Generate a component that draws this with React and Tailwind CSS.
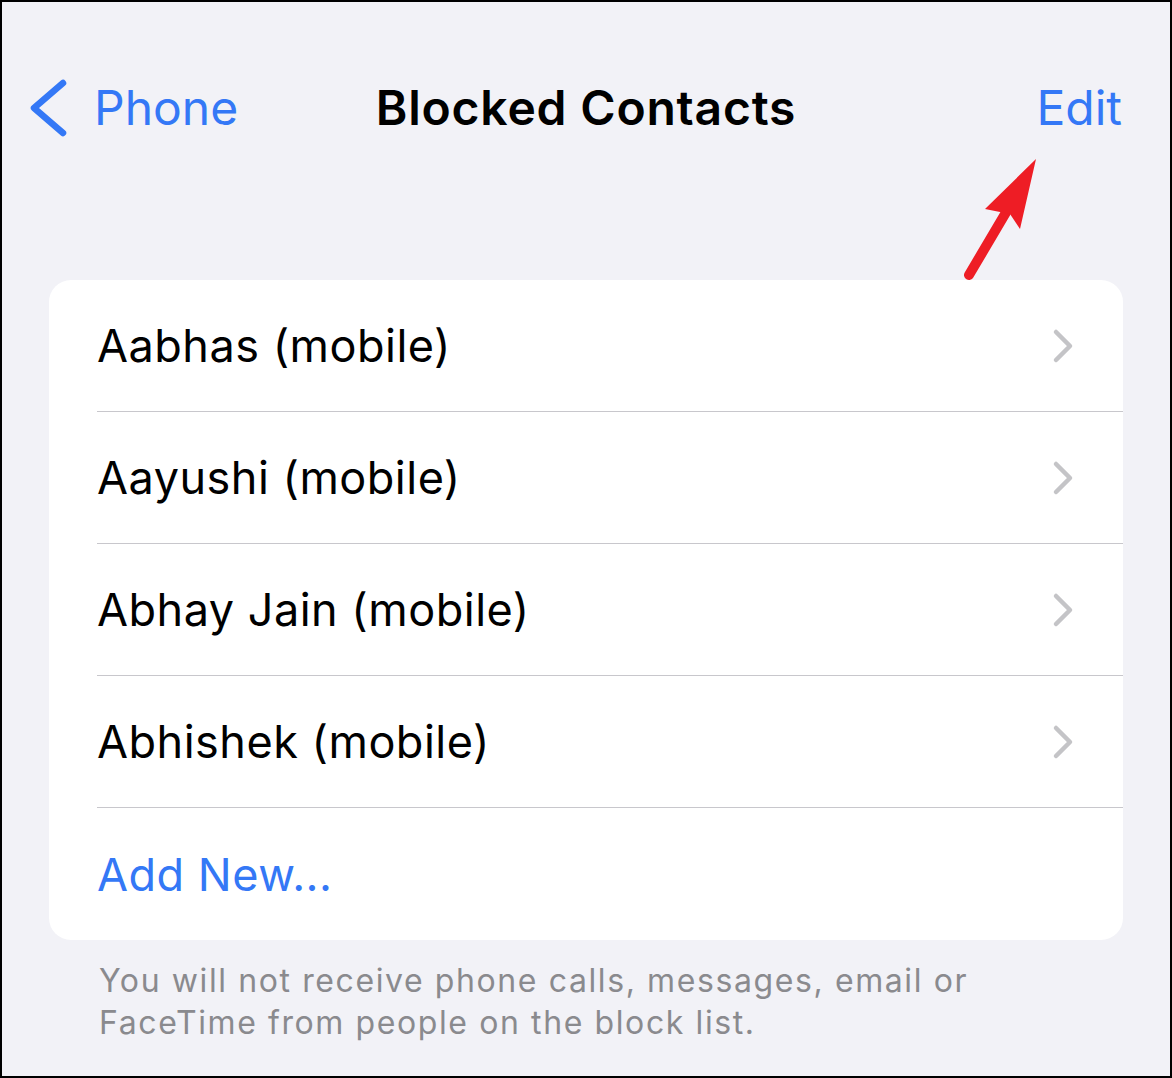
import React from 'react';

const contacts = [
  'Aabhas (mobile)',
  'Aayushi (mobile)',
  'Abhay Jain (mobile)',
  'Abhishek (mobile)',
];

const Chevron = () => (
  <svg width="24" height="36" viewBox="0 0 24 36" fill="none">
    <polyline points="5,4 19,18 5,32" stroke="#c4c4c7" strokeWidth="4.5" strokeLinecap="round" strokeLinejoin="round" />
  </svg>
);

export default function App() {
  return (
    <div
      className="relative w-[1172px] h-[1078px] box-border border-2 border-black bg-[#f2f2f7] overflow-hidden"
      style={{ fontFamily: 'Inter, "Noto Sans", sans-serif' }}
    >
      {/* Nav bar */}
      <div className="mt-[56px] h-[100px] relative flex items-center justify-between px-[26px]">
        <div className="flex items-center gap-[26px] text-[#3478f6]">
          <svg width="40" height="60" viewBox="0 0 40 60" fill="none">
            <polyline points="35,5 6,30 35,55" stroke="#3478f6" strokeWidth="6.5" strokeLinecap="round" strokeLinejoin="round" />
          </svg>
          <span className="text-[48px] leading-none">Phone</span>
        </div>
        <span className="absolute left-0 right-0 text-center text-[48px] font-semibold leading-none text-black tracking-[0.8px] pointer-events-none">
          Blocked Contacts
        </span>
        <span className="text-[48px] leading-none text-[#3478f6] pr-[22px]">Edit</span>
      </div>

      {/* Card */}
      <div className="mt-[122px] mx-[47px] bg-white rounded-[22px] overflow-hidden">
        {contacts.map((name) => (
          <div key={name} className="ml-[48px] h-[132px] flex items-center justify-between border-b border-[#c8c7cc] pr-[48px]">
            <span className="text-[45px] leading-none text-black tracking-[0.5px]">{name}</span>
            <Chevron />
          </div>
        ))}
        <div className="ml-[48px] h-[132px] flex items-center">
          <span className="text-[45px] leading-none text-[#3478f6] tracking-[0.5px]">Add New...</span>
        </div>
      </div>

      {/* Footer note */}
      <p className="mt-[20px] ml-[97px] text-[32px] leading-[42px] text-[#8a8a8e] tracking-[1.6px] w-[1000px]">
        You will not receive phone calls, messages, email or
        <br />
        FaceTime from people on the block list.
      </p>

      {/* Red annotation arrow */}
      <svg className="absolute left-0 top-0 pointer-events-none" width="1172" height="1078" viewBox="0 0 1172 1078">
        <line x1="967" y1="273" x2="1006" y2="207" stroke="#ee1d25" strokeWidth="10" strokeLinecap="round" />
        <polygon points="1034,157 983,207 1008,212 1018,227" fill="#ee1d25" />
      </svg>
    </div>
  );
}
